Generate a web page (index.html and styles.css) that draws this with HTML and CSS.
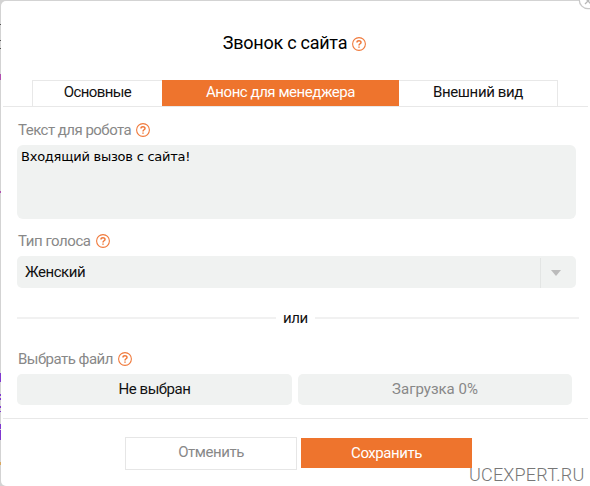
FILE: index.html
```html
<!DOCTYPE html>
<html lang="ru">
<head>
<meta charset="utf-8">
<title>Звонок с сайта</title>
<link rel="stylesheet" href="styles.css">
</head>
<body>
<svg class="edge" width="1" height="486" aria-hidden="true"><path stroke="#555" d="M.5 24v1M.5 40v1M.5 48v1"/><path stroke="#b050b0" d="M.5 74v6M.5 191v2"/><path stroke="#8038d0" d="M.5 373v9M.5 394v2M.5 398v2M.5 406v2M.5 411v1M.5 424v5M.5 430v10"/><path stroke="#d9a860" d="M.5 462v3"/></svg>
<main class="dialog">
  <header class="head"><h1 class="title">Звонок с сайта</h1><svg class="help" viewBox="0 0 14 14"><circle cx="7" cy="7" r="6.4"/><path d="M5 5.4C5 3.3 9 3.2 9 5.4C9 6.8 7 6.7 7 8.4M7 9.5v1.3"/></svg></header>
  <nav class="tabs"><span class="tab first"><span class="t-main">Основные</span></span><span class="tab active"><span class="t-anons">Анонс для менеджера</span></span><span class="tab last"><span class="t-look">Внешний вид</span></span></nav>
  <section class="body">
    <div class="label"><span class="l-robot">Текст для робота</span><svg class="help" viewBox="0 0 14 14"><circle cx="7" cy="7" r="6.4"/><path d="M5 5.4C5 3.3 9 3.2 9 5.4C9 6.8 7 6.7 7 8.4M7 9.5v1.3"/></svg></div>
    <div class="textarea"><span class="message">Входящий вызов с сайта!</span></div>
    <div class="label voice"><span class="l-voice">Тип голоса</span><svg class="help" viewBox="0 0 14 14"><circle cx="7" cy="7" r="6.4"/><path d="M5 5.4C5 3.3 9 3.2 9 5.4C9 6.8 7 6.7 7 8.4M7 9.5v1.3"/></svg></div>
    <div class="select"><span class="value">Женский</span><span class="arrow"><svg width="10" height="6"><path fill="#bbb" d="M0 0h10L5 6z"/></svg></span></div>
    <div class="or"><span class="or-text">или</span></div>
    <div class="label file"><span class="l-file">Выбрать файл</span><svg class="help" viewBox="0 0 14 14"><circle cx="7" cy="7" r="6.4"/><path d="M5 5.4C5 3.3 9 3.2 9 5.4C9 6.8 7 6.7 7 8.4M7 9.5v1.3"/></svg></div>
    <div class="files"><div class="filebox"><span class="f-none">Не выбран</span></div><div class="filebox muted"><span class="f-load">Загрузка 0%</span></div></div>
  </section>
  <footer class="foot"><span class="btn cancel"><span class="b-cancel">Отменить</span></span><span class="btn save"><span class="b-save">Сохранить</span></span></footer>
</main>
<svg class="close" width="12" height="12"><circle cx="10" cy="0" r="8.7" fill="#fff" stroke="#c8c8c8" stroke-width="1.3"/><path stroke="#b8b8b8" stroke-width="1.3" d="M7 4l6-6M7-2l6 6"/></svg>
<span class="watermark">UCEXPERT.RU</span>
</body>
</html>
```
FILE: styles.css
```css
* { box-sizing: border-box; }
body {
  margin: 0;
  width: 590px;
  height: 486px;
  overflow: hidden;
  position: relative;
  background: #d3d3d3;
  font: 15px/20px Roboto, "Noto Sans", sans-serif;
  letter-spacing: -.45px;
  color: #111;
  white-space: nowrap;
}
.edge { position: absolute; left: 0; top: 0; }
.dialog {
  margin: 1px 0 0 1px;
  height: 485px;
  background: #fff;
  border-radius: 5px 0 0 5px;
  overflow: hidden;
}
.head { display: flex; align-items: center; justify-content: center; height: 79px; padding: 7px 2px 0 0; gap: 5px; }
.title { margin: 0; padding-bottom: 2px; font-size: 18px; line-height: 24px; font-weight: 400; color: #000; letter-spacing: -.25px; }
.help { width: 14px; height: 14px; fill: none; stroke: #f07a3c; stroke-width: 1.1; flex: none; overflow: visible; }
.help path { stroke-width: 1.5; }
.tabs { display: flex; height: 27px; margin: 0 2px; padding-left: 29px; border-bottom: 1px solid #e8e8e8; }
.tab { display: flex; align-items: center; justify-content: center; border: 1px solid #e8e8e8; border-bottom: 0; padding-bottom: 3px; }
.first { width: 130px; border-right: 0; }
.active { width: 237px; background: #ee742d; border-color: #ee742d; color: #fff; }
.last { width: 159px; border-left: 0; }
.t-main { letter-spacing: -.6px; }
.t-look { letter-spacing: -.37px; }
.body { padding: 13px 9px 0 16px; }
.label { display: flex; align-items: center; gap: 5px; height: 20px; padding-left: 1px; color: #888; }
.l-robot, .l-file { letter-spacing: -.52px; }
.textarea { width: 559px; height: 74px; margin-top: 5px; padding: 2px 4px; border-radius: 6px; background: #f0f2f1; font: 13px/20px "DejaVu Sans", sans-serif; letter-spacing: -.24px; color: #000; }
.voice { margin-top: 12px; }
.select { display: flex; align-items: center; width: 559px; height: 32px; margin-top: 5px; padding-left: 8px; background: #f0f2f1; border-radius: 5px; }
.value { padding-bottom: 1px; }
.arrow { display: flex; align-items: center; justify-content: center; width: 36px; height: 30px; margin: 2px 0 0 auto; padding-right: 5px; border-left: 1px solid #e3e5e4; }
.or { display: flex; align-items: center; width: 562px; height: 20px; margin-top: 20px; gap: 7px; }
.or::before { content: ""; width: 259px; height: 2px; background: #f1f1f1; }
.or::after { content: ""; flex: 1; height: 2px; background: #f1f1f1; }
.or-text { padding-bottom: 1px; }
.file { margin-top: 21px; }
.files { display: flex; gap: 6px; margin-top: 5px; }
.filebox { width: 274px; height: 31px; display: flex; align-items: center; justify-content: center; padding-bottom: 2px; background: #f0f2f1; border-radius: 5px; }
.filebox:first-child { width: 275px; }
.muted { color: #888; }
.f-load { letter-spacing: 0; }
.foot { display: flex; margin: 13px 2px 0; padding: 18px 0 0 122px; border-top: 1px solid #e8e8e8; gap: 4px; }
.btn { width: 172px; height: 33px; display: flex; align-items: center; justify-content: center; padding-bottom: 3px; }
.cancel { border: 1px solid #e6e6e6; color: #888; }
.save { width: 171px; height: 30px; margin-top: 1px; background: #ee742d; color: #fff; padding-bottom: 1px; }
.close { position: absolute; left: 578px; top: 0; }
.watermark { position: absolute; left: 469px; top: 464px; font: 300 18px/22px Roboto, sans-serif; letter-spacing: .2px; color: #777; text-shadow: 1px 1px #fff; }
```
